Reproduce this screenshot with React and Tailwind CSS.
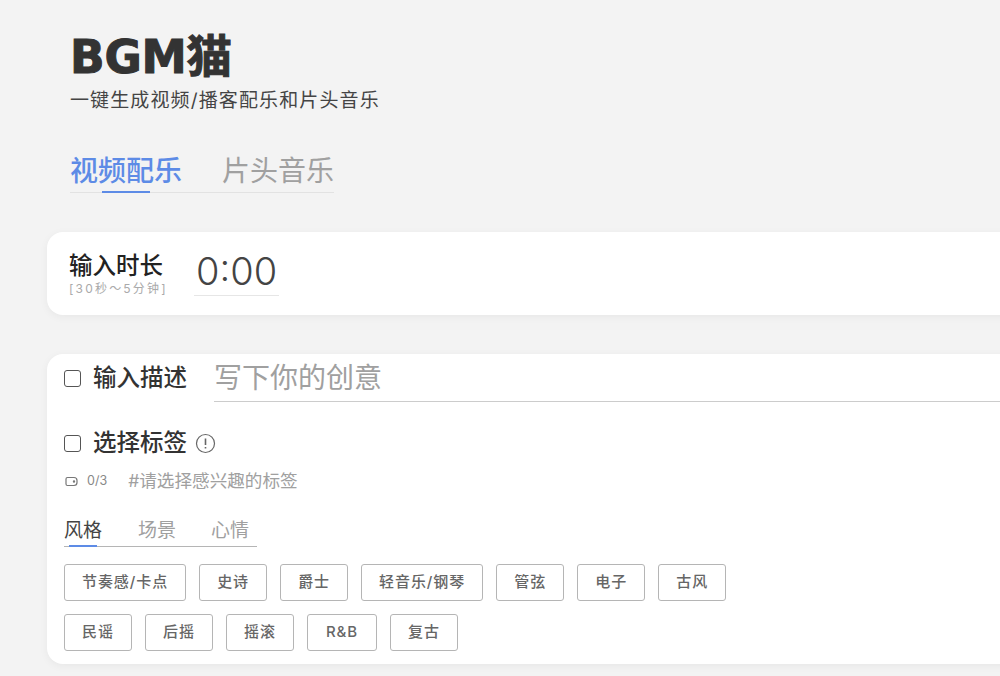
const font = { fontFamily: '"Inter", "Noto Sans CJK SC", sans-serif' };

const rows = [
  ["节奏感/卡点", "史诗", "爵士", "轻音乐/钢琴", "管弦", "电子", "古风"],
  ["民谣", "后摇", "摇滚", "R&B", "复古"],
];

function Tag({ label }) {
  return (
    <span className={`flex h-[37px] items-center justify-center rounded-[3px] border border-[#b5b5b5] px-[17px] text-[15px] font-medium tracking-[0.92px] text-[#666] ${label === "R&B" ? "min-w-[70px]" : "min-w-[68px]"}`}>
      {label}
    </span>
  );
}

function Check() {
  return <span className="h-[17px] w-[17px] shrink-0 rounded-[3px] border border-[#555] bg-white" />;
}

export default function App() {
  return (
    <div className="h-[676px] w-[1000px] overflow-hidden bg-[#f3f3f3]" style={font}>
      <div className="pl-[70px] pt-[33px]">
        <h1 className="flex h-[50px] items-center font-['DejaVu_Sans','Noto_Sans_CJK_SC',sans-serif] text-[45.5px] leading-none font-bold tracking-[-0.3px] text-[#333] [-webkit-text-stroke:1px_#333]">
          BGM猫
        </h1>
        <p className="mt-[5px] h-[26px] text-[19px] leading-[26px] tracking-[1.12px] text-[#444]">一键生成视频/播客配乐和片头音乐</p>
      </div>

      <div className="mt-[37px] ml-[70px] flex h-[42px] w-[264px] border-b border-[#e2e2e2]">
        <div className="relative w-[152px] text-[28px] leading-[40px] font-medium text-[#5d8be6]">
          视频配乐
          <span className="absolute bottom-[-1px] left-[32px] h-[2px] w-[48px] bg-[#5d8be6]" />
        </div>
        <div className="text-[28px] leading-[40px] text-[#a0a0a0]">片头音乐</div>
      </div>

      <section className="mt-[39px] ml-[47px] flex h-[83px] w-[1000px] items-center rounded-[16px] bg-white pl-[22px] shadow-[0_2px_8px_rgba(0,0,0,0.05)]">
        <div className="w-[125px]">
          <div className="text-[23.5px] leading-[30px] font-medium text-[#222]">输入时长</div>
          <div className="mt-[1px] text-[12px] leading-[14px] tracking-[2.2px] whitespace-nowrap text-[#aaa]">[30秒～5分钟]</div>
        </div>
        <div className="mb-[5px] h-[50px] w-[85px] border-b border-[#e6e6e6] pl-[2px] text-[38px] leading-[50px] font-light text-[#444]">0:00</div>
      </section>

      <section className="mt-[39px] ml-[47px] h-[310px] w-[1000px] rounded-[16px] bg-white pl-[17px] shadow-[0_2px_8px_rgba(0,0,0,0.05)]">
        <div className="flex h-[48px] items-center">
          <Check />
          <span className="ml-[12px] text-[23.5px] font-medium text-[#333]">输入描述</span>
          <div className="ml-[27px] flex h-[48px] flex-1 items-center border-b border-[#ccc] pt-[1px] text-[28px] text-[#a0a0a0]">写下你的创意</div>
        </div>

        <div className="mt-[16px] flex h-[50px] items-center">
          <Check />
          <span className="ml-[12px] text-[23.5px] font-medium text-[#333]">选择标签</span>
          <svg className="ml-[8px]" width="21" height="21" viewBox="0 0 21 21" fill="none" stroke="#666" strokeWidth="1.2">
            <circle cx="10.5" cy="10.5" r="9" />
            <path d="M10.5 5.5v6.5M10.5 14v1.5" strokeWidth="1.6" />
          </svg>
        </div>

        <div className="flex h-[26px] items-center">
          <svg className="ml-[1px]" width="14" height="11" viewBox="0 0 14 11" fill="none" stroke="#777" strokeWidth="1.2">
            <path d="M2.5 1.5h6.5a3 3 0 0 1 3 3v2a3 3 0 0 1-3 3h-6.5a1.5 1.5 0 0 1-1.5-1.5V3a1.5 1.5 0 0 1 1.5-1.5Z" />
            <circle cx="9" cy="5.5" r="0.6" />
          </svg>
          <span className="ml-[8px] text-[12.5px] text-[#888]">0/3</span>
          <span className="ml-[21px] text-[17.6px] text-[#a0a0a0]">#请选择感兴趣的标签</span>
        </div>

        <div className="mt-[22px] flex h-[31px] w-[193px] border-b border-[#b5b5b5] pt-[2px] text-[19px] leading-[26px]">
          <span className="relative w-[74px] text-[#444]">
            风格
            <span className="absolute bottom-[-1px] left-[5px] h-[2px] w-[28px] bg-[#5d8be6]" />
          </span>
          <span className="w-[73px] text-[#a0a0a0]">场景</span>
          <span className="text-[#a0a0a0]">心情</span>
        </div>

        <div className="mt-[17px] flex flex-col gap-[13px]">
          {rows.map((row, i) => (
            <div key={i} className="flex gap-[13px]">
              {row.map((t) => (
                <Tag key={t} label={t} />
              ))}
            </div>
          ))}
        </div>
      </section>
    </div>
  );
}
